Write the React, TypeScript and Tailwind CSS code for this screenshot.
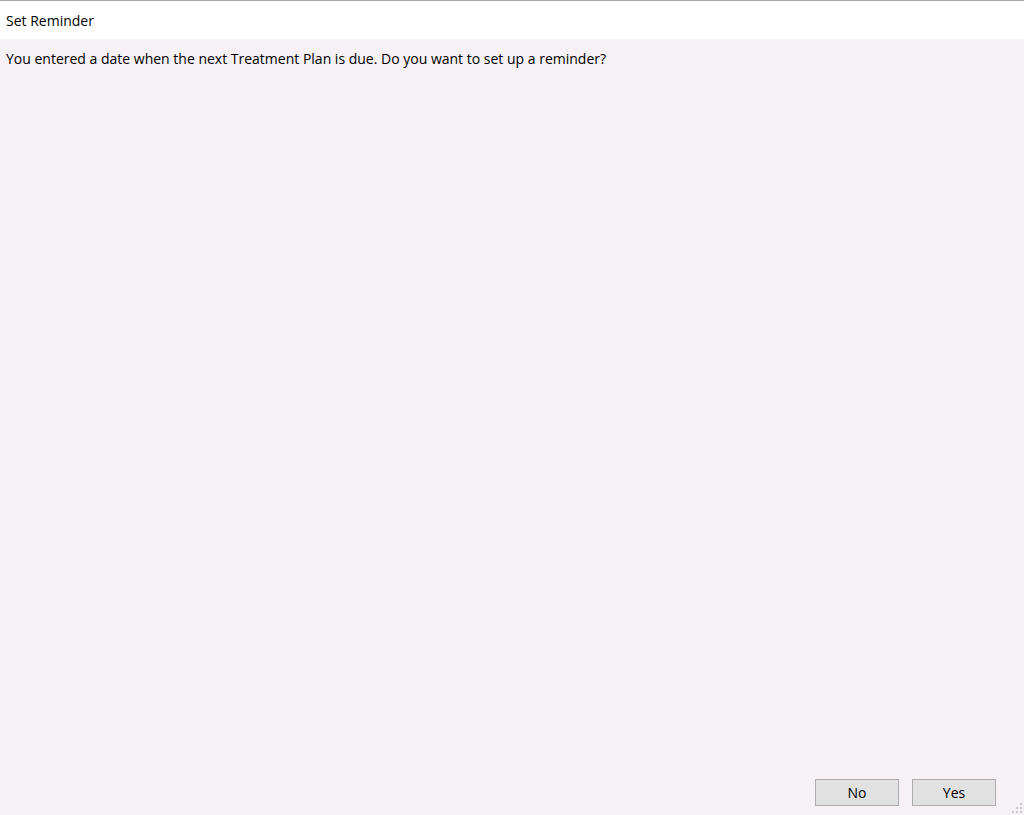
export default function App() {
  return (
    <div className="w-[1024px] h-[815px] flex flex-col bg-[#f6f1f5] text-[14px] text-black overflow-hidden" style={{ fontFamily: '"Open Sans", "Noto Sans", sans-serif' }}>
      <div className="h-px bg-[#a8a8a8]" />
      <div className="h-[38px] bg-white flex items-center px-[6px]">Set Reminder</div>
      <div className="px-[6px] pt-[10px] leading-[20px]">You entered a date when the next Treatment Plan is due. Do you want to set up a reminder?</div>
      <div className="flex-1" />
      <div className="flex justify-end gap-[13px] pr-[28px] pb-[9px] relative">
        <button className="w-[84px] h-[27px] bg-[#e1e1e1] border border-[#adadad] text-[14px] leading-none">No</button>
        <button className="w-[84px] h-[27px] bg-[#e1e1e1] border border-[#adadad] text-[14px] leading-none">Yes</button>
        <svg className="absolute right-[1px] bottom-[1px]" width="12" height="12" viewBox="0 0 12 12">
          {[[9,1],[9,5],[5,5],[9,9],[5,9],[1,9]].map(([x,y],i)=>(<rect key={i} x={x} y={y} width="2" height="2" fill="#c8c8c8" />))}
        </svg>
      </div>
    </div>
  );
}
